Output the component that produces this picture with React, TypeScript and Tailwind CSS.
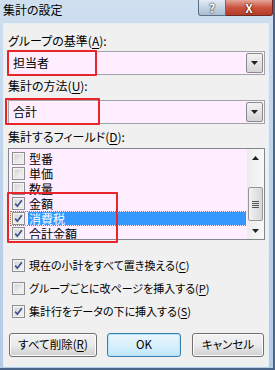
import React from "react";

const font = { fontFamily: '"Noto Sans CJK JP", "Noto Sans", sans-serif', fontFeatureSettings: '"palt"' };

function Check({ checked }: { checked: boolean }) {
  return (
    <div className="w-[13px] h-[13px] border border-[#8e8f8f] bg-[#f4f4f4] p-[1px] shrink-0">
      <div className="w-full h-full bg-gradient-to-br from-[#d4d4d4] to-[#f8f8f8] relative border border-[#e6e6e6]">
        {checked && (
          <svg viewBox="0 0 9 9" className="absolute left-[-1px] top-[-1px] w-[9px] h-[9px]">
            <path d="M1.2 4.6 L3.4 7.2 L7.8 1.2" fill="none" stroke="#3d4f8f" strokeWidth="1.7" />
          </svg>
        )}
      </div>
    </div>
  );
}

function Arrow({ up }: { up?: boolean }) {
  return (
    <svg viewBox="0 0 7 4" className="w-[7px] h-[4px]">
      <path d={up ? "M0 4 L3.5 0 L7 4 Z" : "M0 0 L7 0 L3.5 4 Z"} fill="#222" />
    </svg>
  );
}

function Combo({ text }: { text: string }) {
  return (
    <div className="h-[24px] border border-[#a0a4aa] bg-[#ffeeff] flex items-stretch">
      <div className="flex-1 flex items-center pl-[4px] text-[12px] text-black">{text}</div>
      <div className="w-[17px] m-[1px] rounded-[2px] border border-[#8a8a8a] bg-gradient-to-b from-[#f2f2f2] to-[#d6d6d6] flex items-center justify-center">
        <Arrow />
      </div>
    </div>
  );
}

function U({ c }: { c: string }) {
  return <span className="underline underline-offset-2">{c}</span>;
}

function Row({ label, checked, selected }: { label: string; checked: boolean; selected?: boolean }) {
  return (
    <div
      className={
        "h-[15px] flex items-center gap-[3px] pl-[2px] mr-[1px] " +
        (selected ? "outline outline-1 outline-dotted outline-[#c07020] -outline-offset-1" : "")
      }
    >
      <Check checked={checked} />
      <div
        className={
          "flex-1 h-[13px] flex items-center pl-[1px] text-[12px] leading-[13px] " +
          (selected ? "bg-[#3399ff] text-white" : "text-black")
        }
      >
        {label}
      </div>
    </div>
  );
}

function Btn({ children, w, def }: { children: React.ReactNode; w: string; def?: boolean }) {
  return (
    <div
      className={
        "h-[24px] rounded-[3px] border flex items-center justify-center text-[11.5px] text-black " +
        w +
        " " +
        (def
          ? "border-[#3c7fb1] bg-gradient-to-b from-[#eaf6fd] via-[#d9f0fc] to-[#bee6fd] shadow-[inset_0_0_0_1px_#b9e3f9]"
          : "border-[#707070] bg-gradient-to-b from-[#f2f2f2] via-[#ebebeb] to-[#cfcfcf] shadow-[inset_0_0_0_1px_#fcfcfc]")
      }
    >
      {children}
    </div>
  );
}

export default function App() {
  return (
    <div style={font} className="relative w-[275px] h-[370px] bg-gradient-to-b from-[#cfdff0] via-[#bcd2ea] to-[#b5cce6] border-r-[2px] border-b-[2px] border-[#4a6587] overflow-hidden">
      {/* title bar */}
      <div className="h-[23px] flex items-start justify-between">
        <div className="pl-[3px] pt-[2px] text-[12px] leading-[16px] text-black">集計の設定</div>
        <div className="flex">
          <div className="w-[28px] h-[16px] border border-t-0 border-[#5d6f86] rounded-bl-[3px] bg-gradient-to-b from-[#e4ecf5] via-[#c3d3e4] to-[#a9bdd3] flex items-center justify-center text-white text-[12px] font-bold leading-[14px]" style={{ textShadow: "0 0 2px #333, 0 0 1px #000" }}>
            ?
          </div>
          <div className="w-[47px] h-[16px] border border-t-0 border-l-0 border-[#6b2b22] rounded-br-[3px] bg-gradient-to-b from-[#e5a598] via-[#c9533f] to-[#b53b27] flex items-center justify-center text-white text-[12px] font-bold leading-[14px]" style={{ textShadow: "0 0 2px #400, 0 0 1px #000" }}>
            X
          </div>
        </div>
      </div>

      {/* client */}
      <div className="ml-[3px] w-[266px] h-[344px] bg-[#f0f0f0] border border-[#e8eef5] pl-[4px] pr-[3px] pt-[10px] flex flex-col text-[12px] text-black">
        <div className="h-[14px] leading-[14px]">
          グループの基準(<U c="A" />):
        </div>
        <div className="mt-[3px]">
          <Combo text="担当者" />
        </div>
        <div className="mt-[4px] h-[14px] leading-[14px]">
          集計の方法(<U c="U" />):
        </div>
        <div className="mt-[7px]">
          <Combo text="合計" />
        </div>
        <div className="mt-[6px] h-[14px] leading-[14px]">
          集計するフィールド(<U c="D" />):
        </div>
        <div className="mt-[4px] h-[92px] border border-[#82878f] bg-[#ffeeff] flex overflow-hidden">
          <div className="flex-1 pt-[2px] pl-[1px]">
            <Row label="型番" checked={false} />
            <Row label="単価" checked={false} />
            <Row label="数量" checked={false} />
            <Row label="金額" checked={true} />
            <Row label="消費税" checked={true} selected />
            <Row label="合計金額" checked={true} />
          </div>
          <div className="w-[17px] bg-gradient-to-r from-[#ececec] to-[#f8f8f8] flex flex-col items-center">
            <div className="h-[17px] flex items-center justify-center">
              <Arrow up />
            </div>
            <div className="flex-1 w-full flex flex-col justify-end pb-[1px]">
              <div className="h-[34px] mx-[1px] rounded-[2px] border border-[#979797] bg-gradient-to-r from-[#f2f2f2] to-[#d8d8d8] flex flex-col items-center justify-center gap-[1px]">
                <div className="w-[7px] h-[1px] bg-[#555]" />
                <div className="w-[7px] h-[1px] bg-[#555]" />
                <div className="w-[7px] h-[1px] bg-[#555]" />
                <div className="w-[7px] h-[1px] bg-[#555]" />
              </div>
            </div>
            <div className="h-[17px] flex items-center justify-center">
              <Arrow />
            </div>
          </div>
        </div>

        <div className="mt-[17px] flex flex-col gap-[7px] pl-[4px] text-[11px]">
          <div className="h-[16px] flex items-center gap-[4px]">
            <Check checked={true} />
            <span>
              現在の小計をすべて置き換える(<U c="C" />)
            </span>
          </div>
          <div className="h-[16px] flex items-center gap-[4px]">
            <Check checked={false} />
            <span>
              グループごとに改ページを挿入する(<U c="P" />)
            </span>
          </div>
          <div className="h-[16px] flex items-center gap-[4px]">
            <Check checked={true} />
            <span>
              集計行をデータの下に挿入する(<U c="S" />)
            </span>
          </div>
        </div>

        <div className="mt-[14px] flex pl-[1px]">
          <Btn w="w-[88px]">
            すべて削除(<U c="R" />)
          </Btn>
          <div className="ml-[10px]">
            <Btn w="w-[74px]" def>
              OK
            </Btn>
          </div>
          <div className="ml-[11px]">
            <Btn w="w-[72px]">キャンセル</Btn>
          </div>
        </div>
      </div>

      {/* red annotation boxes */}
      <div className="absolute left-[7px] top-[50px] w-[90px] h-[26px] border-2 border-[#e8262a] rounded-[1px]" />
      <div className="absolute left-[5px] top-[98px] w-[95px] h-[27px] border-2 border-[#e8262a] rounded-[1px]" />
      <div className="absolute left-[7px] top-[192px] w-[111px] h-[51px] border-2 border-[#e8262a] rounded-[1px]" />
    </div>
  );
}
